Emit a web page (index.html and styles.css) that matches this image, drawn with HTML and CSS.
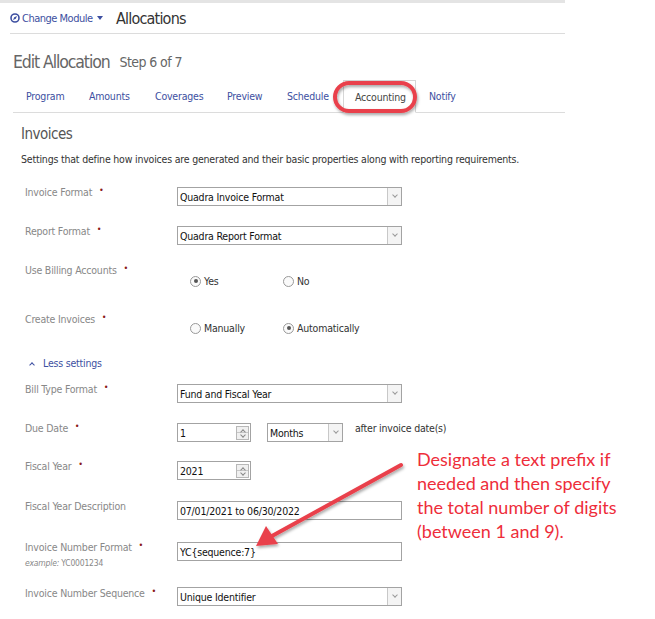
FILE: index.html
```html
<!DOCTYPE html>
<html>
<head>
<meta charset="utf-8">
<link rel="stylesheet" href="styles.css">
</head>
<body>
<div class="page">
  <div class="topband"></div>
  <div class="header">
    <a class="module-link">
      <svg class="module-icon" width="10" height="10" viewBox="0 0 10 10"><circle cx="5" cy="5" r="4" fill="none" stroke="#3d4fa1" stroke-width="1.6"/><path d="M3 7 L4.2 4.2 L7 3 L5.8 5.8 Z" fill="#3d4fa1"/></svg>
      <span>Change Module</span>
      <span class="caret"></span>
    </a>
    <span class="app-title">Allocations</span>
  </div>

  <div class="page-title"><span class="pt-main">Edit Allocation</span><span class="pt-step">Step 6 of 7</span></div>

  <div class="tabs">
    <a class="tab">Program</a>
    <a class="tab">Amounts</a>
    <a class="tab">Coverages</a>
    <a class="tab">Preview</a>
    <a class="tab">Schedule</a>
    <a class="tab active">Accounting</a>
    <a class="tab">Notify</a>
  </div>

  <div class="section">
    <h2 class="section-title">Invoices</h2>
    <p class="section-desc">Settings that define how invoices are generated and their basic properties along with reporting requirements.</p>

    <div class="form">
      <div class="row h39">
        <div class="label">Invoice Format <span class="req">•</span></div>
        <div class="control"><div class="select w225"><span>Quadra Invoice Format</span><i class="dd"></i></div></div>
      </div>
      <div class="row h39">
        <div class="label">Report Format <span class="req">•</span></div>
        <div class="control"><div class="select w225"><span>Quadra Report Format</span><i class="dd"></i></div></div>
      </div>
      <div class="row h49">
        <div class="label">Use Billing Accounts <span class="req">•</span></div>
        <div class="control radios r1">
          <label class="radio"><i class="dot on"></i>Yes</label>
          <label class="radio"><i class="dot"></i>No</label>
        </div>
      </div>
      <div class="row h43">
        <div class="label">Create Invoices <span class="req">•</span></div>
        <div class="control radios r2">
          <label class="radio"><i class="dot"></i>Manually</label>
          <label class="radio"><i class="dot on"></i>Automatically</label>
        </div>
      </div>
      <div class="less"><span class="chev"></span>Less settings</div>
      <div class="row h39">
        <div class="label">Bill Type Format <span class="req">•</span></div>
        <div class="control"><div class="select w225"><span>Fund and Fiscal Year</span><i class="dd"></i></div></div>
      </div>
      <div class="row h38">
        <div class="label">Due Date <span class="req">•</span></div>
        <div class="control inline">
          <div class="number"><span>1</span><i class="spin"><b class="up"></b><b class="down"></b></i></div>
          <div class="select w76"><span>Months</span><i class="dd"></i></div>
          <span class="after">after invoice date(s)</span>
        </div>
      </div>
      <div class="row h40">
        <div class="label">Fiscal Year <span class="req">•</span></div>
        <div class="control"><div class="number"><span>2021</span><i class="spin"><b class="up"></b><b class="down"></b></i></div></div>
      </div>
      <div class="row h41">
        <div class="label">Fiscal Year Description</div>
        <div class="control"><div class="input w225">07/01/2021 to 06/30/2022</div></div>
      </div>
      <div class="row h46">
        <div class="label">Invoice Number Format <span class="req">•</span><div class="example"><em>example:</em> YC0001234</div></div>
        <div class="control"><div class="input w225">YC{sequence:7}</div></div>
      </div>
      <div class="row h39 last">
        <div class="label">Invoice Number Sequence <span class="req">•</span></div>
        <div class="control tight"><div class="select w225"><span>Unique Identifier</span><i class="dd"></i></div></div>
      </div>
    </div>
  </div>

  <svg class="callout-ring" width="100" height="50" viewBox="0 0 100 50">
    <defs><filter id="sh1" x="-20%" y="-40%" width="140%" height="180%"><feDropShadow dx="1" dy="2" stdDeviation="1.5" flood-color="#000" flood-opacity="0.35"/></filter></defs>
    <rect x="6" y="5" width="80" height="28" rx="14" ry="14" fill="none" stroke="#e9414b" stroke-width="4" filter="url(#sh1)"/>
  </svg>

  <svg class="callout-arrow" width="170" height="110" viewBox="0 0 170 110">
    <defs><filter id="sh2" x="-20%" y="-20%" width="140%" height="140%"><feDropShadow dx="1" dy="2" stdDeviation="1.5" flood-color="#000" flood-opacity="0.35"/></filter></defs>
    <g filter="url(#sh2)">
      <line x1="159" y1="13" x2="30" y2="84" stroke="#e9414b" stroke-width="4" stroke-linecap="round"/>
      <path d="M14 94 L24 74 L36 92 Z" fill="#e9414b"/>
    </g>
  </svg>

  <div class="callout-text">Designate a text prefix if needed and then specify the total number of digits (between 1 and 9).</div>
</div>
</body>
</html>
```

FILE: styles.css
```css
* { box-sizing: border-box; }
html, body { margin: 0; padding: 0; background: #fff; }
body {
  font-family: "DejaVu Sans Condensed", "Liberation Sans", sans-serif;
  font-stretch: condensed;
  font-size: 10.5px;
  letter-spacing: -0.2px;
  color: #333;
}
.page { position: relative; width: 655px; height: 619px; overflow: hidden; }
.topband { width: 565px; height: 3px; background: #e4e4e4; }

.header {
  margin-left: 10px; width: 555px; height: 31px;
  border-bottom: 1px solid #dcdcdc;
  display: flex; align-items: center;
}
.module-link { display: flex; align-items: center; color: #3d4fa1; font-size: 11px; letter-spacing: -0.5px; width: 106px; white-space: nowrap; }
.module-icon { margin-right: 2px; flex: none; }
.caret { width: 0; height: 0; border-left: 3.5px solid transparent; border-right: 3.5px solid transparent; border-top: 4px solid #3d4fa1; margin-left: 4px; }
.app-title { font-size: 16px; color: #333; letter-spacing: -0.8px; }

.page-title { margin-left: 13px; height: 46px; display: flex; align-items: center; padding-top: 10px; color: #666; }
.pt-main { font-size: 17.5px; letter-spacing: -1.1px; }
.pt-step { font-size: 14px; margin-left: 10px; letter-spacing: -0.6px; }

.tabs {
  margin-left: 13px; width: 552px; height: 33px;
  border-bottom: 1px solid #dcdcdc;
  display: grid; grid-template-columns: 63px 66px 72px 60px 69px 73px auto;
  align-items: stretch;
}
.tab { color: #3d4fa1; padding-left: 13px; display: flex; align-items: center; font-size: 10.5px; }
.tab.active { color: #444; border: 1px solid #d6d6d6; border-bottom: 1px solid #fff; margin-bottom: -1px; padding-left: 11px; }

.section { padding-left: 21px; }
.section-title { margin: 0; font-weight: normal; font-size: 15px; letter-spacing: -0.5px; color: #555; height: 30px; display: flex; align-items: flex-end; }
.section-desc { margin: 0; height: 42px; padding-top: 10px; color: #333; }

.form { margin-left: 4px; }
.row { display: grid; grid-template-columns: 152px 1fr; align-items: start; }
.h38 { height: 38px; } .h39 { height: 39px; } .h40 { height: 40px; } .h41 { height: 41px; }
.h43 { height: 43px; } .h46 { height: 46px; } .h49 { height: 49px; }
.label { color: #888; line-height: 14px; }
.req { color: #8b1a1a; font-size: 9px; margin-left: 4px; position: relative; top: -3px; }
.example { font-size: 8.5px; color: #888; margin-top: 1px; }
.example em { font-style: italic; }
.control { padding-top: 2px; }
.control.tight { padding-top: 1px; }

.select, .input, .number {
  height: 19px; border: 1px solid #a3a3a3; background: #fff;
  display: flex; align-items: center; color: #111; padding-left: 2px; position: relative;
}
.w225 { width: 225px; }
.w76 { width: 76px; }
.select span { flex: 1; }
.dd { width: 14px; align-self: stretch; border-left: 1px solid #c8c8c8; background: #f4f4f4; position: relative; }
.dd::after { content: ""; position: absolute; left: 5px; top: 5px; width: 3px; height: 3px; border-right: 1px solid #999; border-bottom: 1px solid #999; transform: rotate(45deg); }

.number { width: 74px; }
.number span { flex: 1; }
.spin { width: 13px; height: 14px; border: 1px solid #b8b8b8; background: #f0f0f0; margin-right: 1px; display: flex; flex-direction: column; }
.spin b { flex: 1; position: relative; }
.spin b.up { border-bottom: 1px solid #c8c8c8; }
.spin b::after { content: ""; position: absolute; left: 4px; width: 3px; height: 3px; border-right: 1px solid #888; border-bottom: 1px solid #888; }
.spin b.up::after { top: 3px; transform: rotate(-135deg); }
.spin b.down::after { top: 0px; transform: rotate(45deg); }

.inline { display: flex; align-items: flex-start; }
.inline .select { margin-left: 16px; }
.after { margin-left: 12px; color: #333; margin-top: -1px; }

.radios { display: flex; }
.r1 { padding-top: 12px; }
.r2 { padding-top: 10px; }
.radio { display: flex; align-items: center; color: #333; }
.radio:first-child { width: 93px; margin-left: 13px; }
.dot { width: 11px; height: 11px; border: 1px solid #999; border-radius: 50%; margin-right: 3px; position: relative; background: #fafafa; }
.dot.on::after { content: ""; position: absolute; left: 2.5px; top: 2.5px; width: 4px; height: 4px; border-radius: 50%; background: #555; }

.less { height: 27px; color: #3d4fa1; display: flex; align-items: flex-start; padding-left: 5px; padding-top: 2px; }
.chev { width: 4px; height: 4px; border-left: 1px solid #3d4fa1; border-top: 1px solid #3d4fa1; transform: rotate(45deg); margin-right: 9px; margin-top: 6px; }

.callout-ring { position: absolute; left: 329px; top: 78px; }
.callout-arrow { position: absolute; left: 242px; top: 452px; }
.callout-text {
  position: absolute; left: 417px; top: 447px; width: 215px;
  color: #ee2d3a; font-family: Lato, "Open Sans", sans-serif; font-stretch: normal; letter-spacing: 0; font-size: 18px; line-height: 24px;
}
```
